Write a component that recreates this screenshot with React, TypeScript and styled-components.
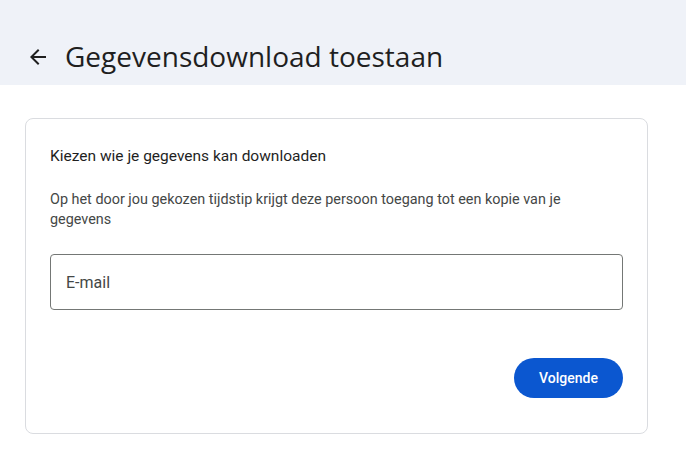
import React from 'react';
import styled, { createGlobalStyle } from 'styled-components';

const GlobalStyle = createGlobalStyle`
  html, body {
    margin: 0;
    padding: 0;
    background: #ffffff;
  }
  body {
    font-family: Roboto, 'Liberation Sans', sans-serif;
    color: #1f1f1f;
  }
`;

const Header = styled.header`
  height: 85px;
  background: #eff2f8;
  display: flex;
  align-items: flex-end;
  box-sizing: border-box;
  padding: 0 0 11px 26px;
`;

const BackButton = styled.button`
  width: 24px;
  height: 24px;
  padding: 0;
  margin-right: 15px;
  border: none;
  background: transparent;
  display: flex;
  align-items: center;
  justify-content: center;
  margin-bottom: 5px;
  cursor: pointer;
  color: #1f1f1f;
`;

const Title = styled.h1`
  margin: 0;
  font-family: 'Open Sans', sans-serif;
  font-weight: 400;
  font-size: 28px;
  line-height: 36px;
  color: #1f1f1f;
`;

const Main = styled.main`
  padding: 33px 38px 0 25px;
`;

const Card = styled.section`
  border: 1px solid #dadce0;
  border-radius: 8px;
  padding: 27px 24px 35px 24px;
  display: flex;
  flex-direction: column;
`;

const CardTitle = styled.h2`
  margin: 0;
  font-family: Roboto, sans-serif;
  font-weight: 400;
  font-size: 15.5px;
  line-height: 20px;
  color: #1f1f1f;
`;

const Description = styled.p`
  margin: 24px 0 0;
  max-width: 560px;
  font-family: Roboto, sans-serif;
  font-size: 14.4px;
  line-height: 20px;
  color: #444746;
`;

const Input = styled.input`
  margin-top: 24px;
  height: 56px;
  box-sizing: border-box;
  border: 1px solid #747775;
  border-radius: 4px;
  padding: 0 15px;
  font-family: Roboto, sans-serif;
  font-size: 16px;
  color: #1f1f1f;
  outline: none;
  &::placeholder {
    color: #444746;
  }
`;

const Actions = styled.div`
  display: flex;
  justify-content: flex-end;
  margin-top: 48px;
`;

const PrimaryButton = styled.button`
  height: 40px;
  padding: 0 24px;
  min-width: 109px;
  border: none;
  border-radius: 20px;
  background: #0b57d0;
  color: #ffffff;
  font-family: Roboto, sans-serif;
  font-weight: 500;
  font-size: 14px;
  cursor: pointer;
`;

export default function App() {
  return (
    <>
      <GlobalStyle />
      <Header>
        <BackButton aria-label="Terug">
          <svg width="24" height="24" viewBox="0 0 24 24" fill="currentColor">
            <path d="M20 11H7.83l5.59-5.59L12 4l-8 8 8 8 1.41-1.41L7.83 13H20v-2z" />
          </svg>
        </BackButton>
        <Title>Gegevensdownload toestaan</Title>
      </Header>
      <Main>
        <Card>
          <CardTitle>Kiezen wie je gegevens kan downloaden</CardTitle>
          <Description>
            Op het door jou gekozen tijdstip krijgt deze persoon toegang tot een kopie van je gegevens
          </Description>
          <Input type="email" placeholder="E-mail" />
          <Actions>
            <PrimaryButton>Volgende</PrimaryButton>
          </Actions>
        </Card>
      </Main>
    </>
  );
}
